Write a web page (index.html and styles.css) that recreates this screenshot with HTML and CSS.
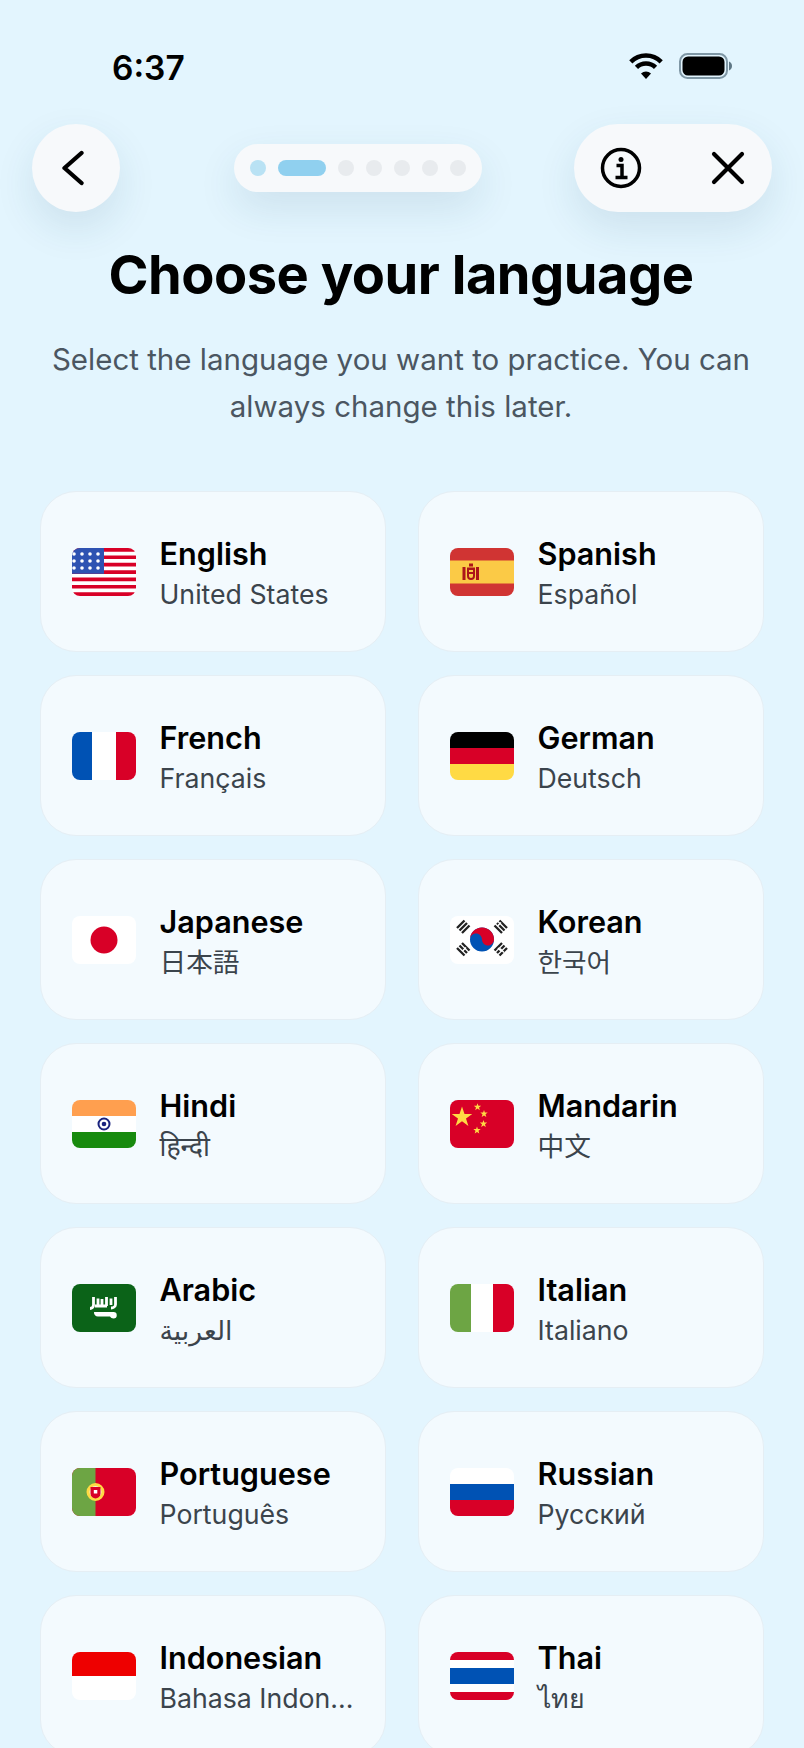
FILE: index.html
```html
<!DOCTYPE html>
<html lang="en">
<head>
<meta charset="utf-8">
<title>Choose your language</title>
<link rel="stylesheet" href="styles.css">
</head>
<body>
<main class="screen">
  <div class="status">
    <span class="clock">6:37</span>
    <div class="status-icons">
      <svg class="wifi" viewBox="0 0 34 26"><path class="arc" d="M1.800 8.800a21.500 21.500 0 0 1 30.400 0"/><path class="arc" d="M7.450 14.450a13.500 13.500 0 0 1 19.100 0"/><path d="M17 26 12 20.400a7.200 7.200 0 0 1 10 0Z"/></svg>
      <svg class="battery" viewBox="0 0 54 26"><rect x="1" y="1" width="47" height="24" rx="7.500" fill="none" stroke="#7f97a5" stroke-width="2"/><rect x="3.500" y="3.500" width="42" height="19" rx="5.500"/><path d="M50 8.500v9c1.900-.6 3-2.400 3-4.500s-1.100-3.900-3-4.500Z" fill="#5f7785"/></svg>
    </div>
  </div>

  <nav class="nav">
    <button class="round" type="button" aria-label="Back">
      <svg class="chevron" viewBox="0 0 28 36"><path d="M19.500 3 2.500 18l17 15"/></svg>
    </button>
    <div class="steps">
      <i class="dot done"></i><i class="bar"></i><i class="dot"></i><i class="dot"></i><i class="dot"></i><i class="dot"></i><i class="dot"></i>
    </div>
    <div class="actions">
      <svg class="info" viewBox="0 0 42 42"><circle cx="21" cy="21" r="18.500"/><circle class="solid" cx="21" cy="12.500" r="2.500"/><path d="M16.500 18.500H22V30M15.500 30.500h12"/></svg>
      <svg class="close" viewBox="0 0 34 34"><path d="M3 3 31 31M31 3 3 31"/></svg>
    </div>
  </nav>

  <h1 class="title">Choose your language</h1>
  <p class="lead">Select the language you want to practice. You can always change this later.</p>

  <section class="grid">
    <article class="card">
      <svg class="flag" viewBox="0 0 64 48">
        <rect width="64" height="48" fill="#fff"/>
        <path fill="#d80027" d="M0 0h64v3.700H0zM0 7.400h64v3.700H0zM0 14.800h64v3.700H0zM0 22.200h64v3.700H0zM0 29.500h64v3.700H0zM0 36.900h64v3.700H0zM0 44.300h64V48H0z"/>
        <rect width="32" height="25.800" fill="#2e52b2"/>
        <g fill="#fff"><circle cx="2" cy="6" r="1.800"/><circle cx="10" cy="6" r="1.800"/><circle cx="18" cy="6" r="1.800"/><circle cx="26" cy="6" r="1.800"/><circle cx="2" cy="13" r="1.800"/><circle cx="10" cy="13" r="1.800"/><circle cx="18" cy="13" r="1.800"/><circle cx="26" cy="13" r="1.800"/><circle cx="2" cy="20" r="1.800"/><circle cx="10" cy="20" r="1.800"/><circle cx="18" cy="20" r="1.800"/><circle cx="26" cy="20" r="1.800"/></g>
      </svg>
      <div class="label"><h2 class="name">English</h2><p class="native">United States</p></div>
    </article>

    <article class="card">
      <svg class="flag" viewBox="0 0 64 48">
        <rect width="64" height="48" fill="#d03433"/>
        <rect y="12.500" width="64" height="23" fill="#fbca46"/>
        <g fill="#ad1519"><rect x="12.500" y="19" width="3" height="13"/><rect x="26" y="19" width="3" height="13"/><rect x="19" y="15.500" width="4" height="3"/><path d="M17 19.500h8V28a4 4 0 0 1-8 0Zm2 2.500v2h4v-2Zm0 4v2a2 2 0 0 0 4 0v-2Z"/></g>
      </svg>
      <div class="label"><h2 class="name">Spanish</h2><p class="native">Español</p></div>
    </article>

    <article class="card">
      <svg class="flag" viewBox="0 0 64 48"><rect width="64" height="48" fill="#fff"/><rect width="20" height="48" fill="#0052b4"/><rect x="44" width="20" height="48" fill="#d80027"/></svg>
      <div class="label"><h2 class="name">French</h2><p class="native">Français</p></div>
    </article>

    <article class="card">
      <svg class="flag" viewBox="0 0 64 48"><rect width="64" height="16" fill="#000"/><rect y="16" width="64" height="16" fill="#d80027"/><rect y="32" width="64" height="16" fill="#ffda44"/></svg>
      <div class="label"><h2 class="name">German</h2><p class="native">Deutsch</p></div>
    </article>

    <article class="card">
      <svg class="flag" viewBox="0 0 64 48"><rect width="64" height="48" fill="#fff"/><circle cx="32" cy="24" r="13.500" fill="#d80027"/></svg>
      <div class="label"><h2 class="name">Japanese</h2><p class="native cjk-jp">日本語</p></div>
    </article>

    <article class="card">
      <svg class="flag" viewBox="0 0 64 48">
        <rect width="64" height="48" fill="#fff"/>
        <circle cx="32" cy="23.500" r="12" fill="#0052b4"/>
        <path fill="#d80027" d="M20 23.500a12 12 0 0 1 24 0c0 3.300-2.700 6-6 6s-6-2.700-6-6-2.700-6-6-6-6 2.700-6 6Z"/>
        <g stroke="#222" stroke-width="2.300" fill="none"><path d="M14.500 4.500 7 12M17 7 9.500 14.500M19.500 9.500 12 17"/><path d="M44.500 9.500 52 17M47 7 54.500 14.500M49.500 4.500 57 12"/><path d="M7 32 14.500 39.500M9.500 29.500 17 37M12 27 19.500 34.500"/><path d="M52 27 44.500 34.500M54.500 29.500 47 37M57 32 49.500 39.500"/></g>
        <g stroke="#fff" stroke-width="1.500"><path d="M47.500 10 51 6.500M48 32 51.500 35.500M12.500 35 16 31.500M50 32.500l4 4"/></g>
      </svg>
      <div class="label"><h2 class="name">Korean</h2><p class="native cjk-kr">한국어</p></div>
    </article>

    <article class="card">
      <svg class="flag" viewBox="0 0 64 48">
        <rect width="64" height="48" fill="#fff"/><rect width="64" height="16" fill="#ff9f4f"/><rect y="32" width="64" height="16" fill="#178a0e"/>
        <circle cx="32" cy="24" r="5.500" fill="none" stroke="#1a237e" stroke-width="2"/><circle cx="32" cy="24" r="2.300" fill="#1a237e"/>
      </svg>
      <div class="label"><h2 class="name">Hindi</h2><p class="native">हिन्दी</p></div>
    </article>

    <article class="card">
      <svg class="flag" viewBox="0 0 64 48">
        <rect width="64" height="48" fill="#d80027"/>
        <g fill="#ffda44">
          <path d="M12 6.500l2.500 7.400h7.800l-6.300 4.600 2.400 7.400-6.400-4.600-6.400 4.600 2.400-7.400-6.300-4.600h7.800Z"/>
          <path d="M27.500 3.200l.9 2.600h2.800l-2.200 1.700.8 2.700-2.300-1.600-2.300 1.600.8-2.700-2.200-1.700h2.800Z"/>
          <path d="M34 10l.9 2.600h2.800l-2.200 1.700.8 2.700-2.300-1.600-2.300 1.600.8-2.700-2.200-1.700h2.800Z"/>
          <path d="M33.500 20l.9 2.600h2.800L35 24.300l.8 2.700-2.300-1.600-2.300 1.600.8-2.700-2.200-1.700h2.800Z"/>
          <path d="M27 26.500l.9 2.600h2.800l-2.200 1.700.8 2.700-2.300-1.600-2.300 1.600.8-2.700-2.200-1.700h2.800Z"/>
        </g>
      </svg>
      <div class="label"><h2 class="name">Mandarin</h2><p class="native cjk-sc">中文</p></div>
    </article>

    <article class="card">
      <svg class="flag" viewBox="0 0 64 48">
        <rect width="64" height="48" fill="#0b6318"/>
        <g stroke="#fff" stroke-width="2.800" fill="none"><path d="M21.500 13v8c0 2-1.500 3.500-3.500 3.500M26 14.500v7.500M23 22h12M30 15v6M34.500 13v9M39 14.500v6.500M43.500 13v7.500c0 2-2 3.500-4.500 3.500"/></g>
        <path fill="#fff" d="M22 28h19.500a2.800 2.800 0 0 1 0 6.500c-1.500 0-2.800-.8-3.500-2H26a4 4 0 0 1-4-4.500Z"/>
      </svg>
      <div class="label"><h2 class="name">Arabic</h2><p class="native">العربية</p></div>
    </article>

    <article class="card">
      <svg class="flag" viewBox="0 0 64 48"><rect width="64" height="48" fill="#fff"/><rect width="21" height="48" fill="#6da544"/><rect x="43" width="21" height="48" fill="#d80027"/></svg>
      <div class="label"><h2 class="name">Italian</h2><p class="native">Italiano</p></div>
    </article>

    <article class="card">
      <svg class="flag" viewBox="0 0 64 48">
        <rect width="64" height="48" fill="#d80027"/><rect width="23.500" height="48" fill="#6da544"/>
        <circle cx="23.500" cy="24" r="7.500" fill="#f5f0e0" stroke="#ffda44" stroke-width="3"/>
        <path fill="#d80027" d="M18.500 19h10v6.500a5 5 0 0 1-10 0Z"/><rect x="21.800" y="22" width="3.500" height="3.500" fill="#fff"/>
      </svg>
      <div class="label"><h2 class="name">Portuguese</h2><p class="native">Português</p></div>
    </article>

    <article class="card">
      <svg class="flag" viewBox="0 0 64 48"><rect width="64" height="16" fill="#fff"/><rect y="16" width="64" height="16" fill="#0052b4"/><rect y="32" width="64" height="16" fill="#d80027"/></svg>
      <div class="label"><h2 class="name">Russian</h2><p class="native">Русский</p></div>
    </article>

    <article class="card">
      <svg class="flag" viewBox="0 0 64 48"><rect width="64" height="24" fill="#ee0000"/><rect y="24" width="64" height="24" fill="#fff"/></svg>
      <div class="label"><h2 class="name">Indonesian</h2><p class="native">Bahasa Indon...</p></div>
    </article>

    <article class="card">
      <svg class="flag" viewBox="0 0 64 48"><rect width="64" height="48" fill="#fff"/><rect width="64" height="8" fill="#d80027"/><rect y="16" width="64" height="16" fill="#0052b4"/><rect y="40" width="64" height="8" fill="#d80027"/></svg>
      <div class="label"><h2 class="name">Thai</h2><p class="native">ไทย</p></div>
    </article>
  </section>
</main>
</body>
</html>
```

FILE: styles.css
```css
* { box-sizing: border-box; }

html, body {
  margin: 0;
  height: 100%;
}

body {
  background: #e3f5fe;
  font-family: Inter, "Noto Sans", "Noto Sans CJK JP", "DejaVu Sans", sans-serif;
  color: #000;
  overflow: hidden;
}

.screen {
  height: 1748px;
  overflow: hidden;
  padding-top: 42px;
}

/* Status bar */
.status {
  height: 48px;
  padding: 0 71px 0 112px;
  display: flex;
  align-items: center;
  justify-content: space-between;
}

.clock {
  padding-top: 3px;
  font-size: 33.5px;
  font-weight: 600;
}

.status-icons {
  display: flex;
  align-items: center;
  gap: 16px;
}

.wifi { width: 34px; height: 26px; }
.wifi .arc { fill: none; stroke: #000; stroke-width: 4.5; }
.battery { width: 54px; height: 26px; }

/* Top navigation */
.nav {
  margin-top: 34px;
  padding: 0 32px;
  height: 88px;
  display: flex;
  align-items: center;
}

.round,
.actions {
  background: #f7f9fb;
  border: 0;
  box-shadow: 0 16px 40px rgba(20, 70, 100, 0.11);
}

.round {
  width: 88px;
  height: 88px;
  padding: 0;
  border-radius: 50%;
  display: flex;
  align-items: center;
  justify-content: center;
}

.chevron {
  width: 28px;
  height: 36px;
  fill: none;
  stroke: #000;
  stroke-width: 4.3;
  stroke-linecap: round;
  stroke-linejoin: round;
}

.steps {
  margin-left: 114px;
  width: 248px;
  height: 48px;
  padding: 0 16px;
  border-radius: 24px;
  background: #f7f9fb;
  box-shadow: 0 16px 40px rgba(20, 70, 100, 0.11);
  display: flex;
  align-items: center;
  gap: 12px;
}

.dot {
  width: 16px;
  height: 16px;
  border-radius: 50%;
  background: #e8ebee;
}

.dot.done { background: #b9e2f4; }

.bar {
  width: 48px;
  height: 16px;
  border-radius: 8px;
  background: #90d0ef;
}

.actions {
  margin-left: 92px;
  width: 198px;
  height: 88px;
  border-radius: 44px;
  padding: 0 27px 0 26px;
  display: flex;
  align-items: center;
  justify-content: space-between;
}

.info {
  width: 42px;
  height: 42px;
  fill: none;
  stroke: #000;
  stroke-width: 3.5;
}

.info .solid {
  fill: #000;
  stroke: none;
}

.close {
  width: 34px;
  height: 34px;
  fill: none;
  stroke: #000;
  stroke-width: 4.2;
  stroke-linecap: round;
}

/* Heading */
.title {
  margin: 28px 0 0;
  padding-right: 2px;
  font-size: 54.2px;
  line-height: 68px;
  font-weight: 700;
  letter-spacing: -0.5px;
  text-align: center;
}

.lead {
  margin: 28px 2px 0 0;
  padding: 0 41px;
  font-size: 29.5px;
  line-height: 47px;
  font-weight: 400;
  color: #4b5661;
  text-align: center;
}

/* Language cards */
.grid {
  margin-top: 61px;
  padding: 0 40.5px 0 40px;
  display: grid;
  grid-template-columns: 345.5px 345.5px;
  gap: 23px 32.5px;
}

.card {
  height: 161px;
  padding: 0 30.5px;
  border: 1.5px solid #e5eef4;
  border-radius: 36px;
  background: #f3fafe;
  display: flex;
  align-items: center;
  gap: 24px;
}

.flag {
  flex: none;
  width: 64px;
  height: 48px;
  border-radius: 8px;
  overflow: hidden;
}

.label {
  min-width: 0;
  flex: 1;
  padding-top: 4px;
}

.name {
  margin: 0;
  font-size: 30.6px;
  line-height: 40px;
  font-weight: 600;
}

.native {
  margin: 0;
  font-size: 26.7px;
  line-height: 40px;
  font-weight: 400;
  color: #3b444c;
  white-space: nowrap;
}

.cjk-jp { font-family: Inter, "Noto Sans CJK JP", sans-serif; }
.cjk-kr { font-family: Inter, "Noto Sans CJK KR", sans-serif; }
.cjk-sc { font-family: Inter, "Noto Sans CJK SC", sans-serif; }
```
